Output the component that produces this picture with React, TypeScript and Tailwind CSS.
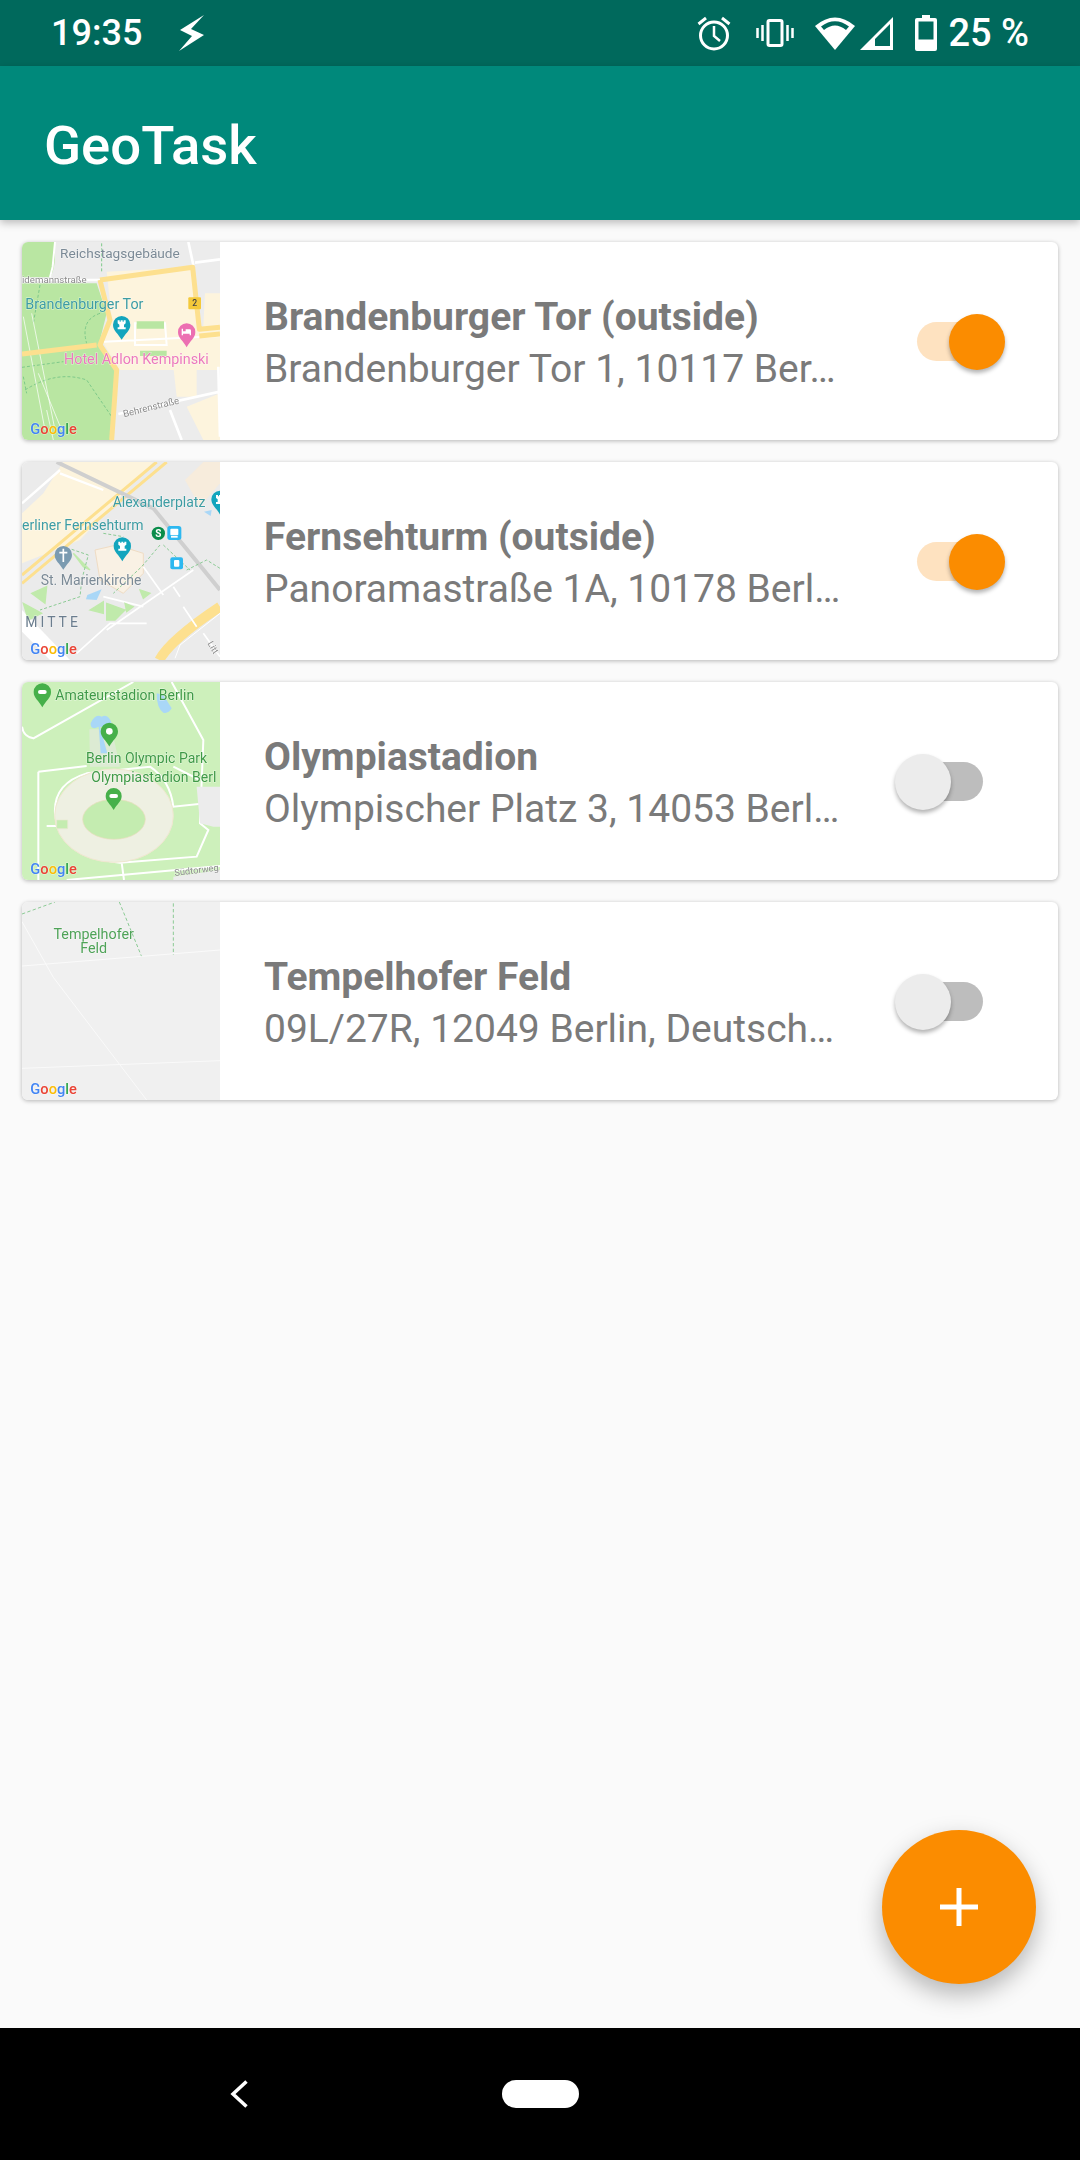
import { ReactNode } from 'react';

interface Place {
  name: string;
  address: string;
  on: boolean;
  map: ReactNode;
}

// map tiles are drawn in a 594 unit box (3 units per screen pixel)
function MapLabel({ x, y, size = 43, fill, children, anchor, spacing, rotate }: {
  x: number;
  y: number;
  size?: number;
  fill: string;
  children: ReactNode;
  anchor?: 'middle';
  spacing?: number;
  rotate?: number;
}) {
  return (
    <text
      x={x}
      y={y}
      fontSize={size}
      fill={fill}
      textAnchor={anchor}
      letterSpacing={spacing}
      stroke="#ffffff"
      strokeOpacity={0.55}
      strokeWidth={3}
      paintOrder="stroke"
      transform={rotate ? `rotate(${rotate} ${x} ${y})` : undefined}
    >
      {children}
    </text>
  );
}

function GoogleMark() {
  return (
    <text x={91} y={612} fontSize={44} fontWeight={500} stroke="#ffffff" strokeOpacity={0.5} strokeWidth={3} paintOrder="stroke">
      <tspan fill="#4285f4">G</tspan>
      <tspan fill="#ea4335">o</tspan>
      <tspan fill="#fbbc05">o</tspan>
      <tspan fill="#4285f4">g</tspan>
      <tspan fill="#34a853">l</tspan>
      <tspan fill="#ea4335">e</tspan>
    </text>
  );
}

function Pin({ x, y, r = 26, fill, children }: { x: number; y: number; r?: number; fill: string; children?: ReactNode }) {
  return (
    <g>
      <path d={`M${x - r} ${y}a${r} ${r} 0 1 1 ${r * 2} 0c0 ${r * 0.7} -${r * 0.6} ${r} -${r} ${r * 1.75}c-${r * 0.4} -${r * 0.75} -${r} -${r * 1.05} -${r} -${r * 1.75}z`} fill={fill} />
      {children}
    </g>
  );
}

function Rook({ x, y }: { x: number; y: number }) {
  return <path d={`M${x - 12} ${y - 13}h6v4h3v-4h6v4h3v-4h6v9l-5 4v8h5v6h-24v-6h5v-8l-5 -4z`} fill="#fff" />;
}

function Tile({ bg, children }: { bg: string; children: ReactNode }) {
  return (
    <svg viewBox="66 36 594 594" className="w-[198px] h-[198px] shrink-0 blur-[0.4px] [font-family:Roboto,sans-serif]" style={{ background: bg }}>
      {children}
      <GoogleMark />
    </svg>
  );
}

const brandenburgMap = (
  <Tile bg="#ececec">
    <path d="M66 36H165V90Q160 130 150 142H66Z" fill="#b9e6a2" />
    <path d="M66 160H290L320 250L300 330L345 415L330 630H66Z" fill="#b9e6a2" />
    <path d="M320 125L578 112L598 290L660 285V420H360L310 340L335 265Z" fill="#fdf4dd" />
    <path d="M615 190L660 190V285L610 290ZM560 530L660 490V630H610ZM520 410H590V500H530Z" fill="#fdf4dd" />
    <path d="M165 36L158 110L150 142" stroke="#fff" strokeWidth="6" fill="none" />
    <path d="M66 150H300" stroke="#fff" strokeWidth="8" />
    <path d="M565 36L580 105M585 98L660 88M655 410L660 620M355 552L660 485M510 540L545 630" stroke="#fff" strokeWidth="8" fill="none" />
    <path d="M405 280H495L500 345H405ZM312 335L660 318" stroke="#fff" strokeWidth="6" fill="none" />
    <path d="M410 274H492V296H410ZM420 362H500V378H420Z" fill="#b9e6a2" />
    <path d="M305 40V130M66 412L190 395M70 440L80 490M75 480Q170 420 260 450L335 560M300 250Q240 270 260 340M120 165L100 280" stroke="#7ec98a" strokeWidth="3" strokeDasharray="9 6" fill="none" />
    <path d="M70 260L135 600M95 250L165 600M115 430L185 600M140 540L160 630" stroke="#fff" strokeWidth="3" fill="none" opacity="0.7" />
    <path d="M66 372L290 345M300 150L330 270L300 345L350 420L335 630M300 150L578 112L598 298L660 292M598 318L660 312" stroke="#fde08f" strokeWidth="15" fill="none" strokeLinejoin="round" />
    <rect x="565" y="202" width="38" height="36" rx="3" fill="#f4c93a" />
    <text x="584" y="229" fontSize="26" fill="#444" textAnchor="middle" fontWeight="500">2</text>
    <MapLabel x={180} y={84} size={41} fill="#7b8a96">Reichstagsgebäude</MapLabel>
    <MapLabel x={66} y={160} size={29} fill="#8b8b8b">idemannstraße</MapLabel>
    <MapLabel x={76} y={236} fill="#3d9ca3">Brandenburger Tor</MapLabel>
    <Pin x={365} y={284} fill="#13a5bd"><Rook x={365} y={284} /></Pin>
    <Pin x={560} y={306} fill="#ec6fb2"><path d="M545 296h4v8h8v-6h12q4 0 4 4v14h-4v-5h-20v5h-4z" fill="#fff" /></Pin>
    <MapLabel x={192} y={402} fill="#ec7abd">Hotel Adlon Kempinski</MapLabel>
    <MapLabel x={372} y={562} size={29} fill="#8b8b8b" rotate={-14}>Behrenstraße</MapLabel>
  </Tile>
);

const fernsehturmMap = (
  <Tile bg="#ebebeb">
    <path d="M190 36H460L240 270L66 340V190L130 130Z" fill="#fdf4dd" />
    <path d="M555 90L610 36H660V100L600 170Z" fill="#f7ecdc" />
    <path d="M285 300L350 285L430 310L430 370L370 430L300 390Z" fill="#f9f1e4" stroke="#efdcc4" strokeWidth="3" />
    <path d="M66 375L470 36M66 400L500 36" stroke="#fde08f" strokeWidth="9" fill="none" />
    <path d="M170 36L460 175L660 420" stroke="#cfcfcf" strokeWidth="12" fill="none" />
    <path d="M478 630Q510 570 660 470" stroke="#fde08f" strokeWidth="30" fill="none" />
    <path d="M525 625L540 585L660 490" stroke="#fff" strokeWidth="3" fill="none" />
    <path d="M66 160L180 60M180 70L310 120" fill="none" stroke="#fff" strokeWidth="7" />
    <path d="M66 480L210 630H150L66 545Z" fill="#fff" />
    <path d="M320 540L580 360M310 440L430 470M430 350L490 435M520 410L540 440M550 470L590 530M230 610L330 520H440M610 550L660 620" stroke="#fff" strokeWidth="5" fill="none" />
    <path d="M220 310L270 360L250 350ZM95 430L140 410L135 460ZM70 460L125 490L85 510ZM270 480L310 455L310 490ZM320 460L375 480L345 510L320 510ZM375 460L400 470L380 485ZM420 420L450 430L430 445Z" fill="#c0eaab" stroke="#c0eaab" strokeWidth="4" />
    <path d="M262 435L305 418L290 450L258 448Z" fill="#a9d7f7" />
    <path d="M612 185L635 180L632 198Z" fill="#a9d7f7" />
    <path d="M215 298L265 315L245 390L240 440L120 480M480 285L425 350L340 430M310 250L370 260M560 360L620 330L660 355M490 285L570 360" stroke="#8ccb95" strokeWidth="3" strokeDasharray="9 6" fill="none" />
    <MapLabel x={338} y={172} size={42} fill="#3d9ca3">Alexanderplatz</MapLabel>
    <Pin x={660} y={148} fill="#13a5bd"><Rook x={660} y={148} /></Pin>
    <MapLabel x={66} y={240} size={42} fill="#3d9ca3">erliner Fernsehturm</MapLabel>
    <Pin x={367} y={288} fill="#13a5bd"><Rook x={367} y={288} /></Pin>
    <circle cx="475" cy="250" r="20" fill="#0a8c4a" />
    <text x="475" y="261" fontSize="30" fill="#fff" textAnchor="middle" fontWeight="700">S</text>
    <rect x="502" y="228" width="42" height="42" rx="8" fill="#2db8f0" />
    <rect x="511" y="236" width="24" height="20" rx="3" fill="#fff" />
    <rect x="513" y="258" width="20" height="5" fill="#fff" />
    <rect x="511" y="322" width="38" height="36" rx="6" fill="#2db8f0" />
    <rect x="522" y="330" width="16" height="20" rx="3" fill="#fff" />
    <Pin x={190} y={314} fill="#7b9bb1">
      <path d="M190 296V336M178 308H202" stroke="#fff" strokeWidth="5" />
    </Pin>
    <MapLabel x={122} y={406} size={42} fill="#7b8a96">St. Marienkirche</MapLabel>
    <MapLabel x={76} y={532} size={42} fill="#6b7d8e" spacing={9}>MITTE</MapLabel>
    <MapLabel x={622} y={580} size={27} fill="#8b8b8b" rotate={60}>Litt</MapLabel>
  </Tile>
);

const stadionMap = (
  <Tile bg="#cdf0bb">
    <path d="M66 170Q70 200 100 205L400 36M515 36L610 210L600 460L625 480L590 560L360 578Q180 560 165 430Q160 340 260 310L450 290Q510 330 520 410L660 395M115 305V630M115 305L260 288M140 468H190M365 578L372 630M200 630L660 588M520 290L600 330" stroke="#fff" strokeWidth="6" fill="none" />
    <ellipse cx="342" cy="437" rx="178" ry="140" fill="#eef0e2" stroke="#f0e7d0" strokeWidth="3" />
    <ellipse cx="342" cy="448" rx="94" ry="60" fill="#c4ecb0" stroke="#ecdcc0" strokeWidth="2" />
    <path d="M170 450H203V476H170Z" fill="#c4ecb0" stroke="#e8e8d0" strokeWidth="2" />
    <path d="M590 350H660V470H640L600 460Z" fill="#ececec" />
    <path d="M520 620L660 600V630H520Z" fill="#ececec" />
    <path d="M268 178H335L360 290H270Z" fill="#dcebd3" />
    <path d="M272 160Q285 130 305 140Q325 130 335 160L330 175L300 170L322 250H302L296 170L285 175Q270 175 272 160Z" fill="#a9d7f7" />
    <path d="M470 70L490 75L515 115Q505 132 490 128Q470 115 470 70Z" fill="#a9d7f7" />
    <Pin x={127} y={66} fill="#46b04a"><rect x="114" y="60" width="26" height="12" rx="6" fill="#fff" /></Pin>
    <MapLabel x={166} y={90} size={42} fill="#3f9a47">Amateurstadion Berlin</MapLabel>
    <Pin x={328} y={184} fill="#46b04a"><circle cx="328" cy="184" r="10" fill="#fff" /></Pin>
    <MapLabel x={258} y={278} size={42} fill="#3f9a47">Berlin Olympic Park</MapLabel>
    <MapLabel x={274} y={335} size={42} fill="#3f9a47">Olympiastadion Berl</MapLabel>
    <Pin x={341} y={378} r={24} fill="#46b04a"><rect x="328" y="372" width="26" height="12" rx="6" fill="#fff" /></Pin>
    <MapLabel x={524} y={618} size={28} fill="#8b8b8b" rotate={-7}>Südtorweg</MapLabel>
  </Tile>
);

const tempelhofMap = (
  <Tile bg="#f0f0f0">
    <path d="M66 72L165 36M358 36L425 200M520 40V195" stroke="#8ccb95" strokeWidth="3" strokeDasharray="10 7" fill="none" />
    <path d="M66 228L660 180M66 95L160 262L440 630M66 535L660 512" stroke="#fafafa" strokeWidth="3" fill="none" />
    <MapLabel x={281} y={146} anchor="middle" fill="#4fa358">Tempelhofer</MapLabel>
    <MapLabel x={281} y={190} anchor="middle" fill="#4fa358">Feld</MapLabel>
  </Tile>
);

const places: Place[] = [
  { name: 'Brandenburger Tor (outside)', address: 'Brandenburger Tor 1, 10117 Ber…', on: true, map: brandenburgMap },
  { name: 'Fernsehturm (outside)', address: 'Panoramastraße 1A, 10178 Berl…', on: true, map: fernsehturmMap },
  { name: 'Olympiastadion', address: 'Olympischer Platz 3, 14053 Berl…', on: false, map: stadionMap },
  { name: 'Tempelhofer Feld', address: '09L/27R, 12049 Berlin, Deutsch…', on: false, map: tempelhofMap },
];

function Toggle({ on }: { on: boolean }) {
  return (
    <div className={`relative w-[66px] h-[39px] rounded-full shrink-0 ${on ? 'bg-[#fee2c0]' : 'bg-[#bdbdbd]'}`}>
      <div
        className={`absolute top-[-8px] w-[56px] h-[56px] rounded-full shadow-[0_3px_4px_rgba(0,0,0,0.3)] ${
          on ? 'right-[-22px] bg-[#fb8c00]' : 'left-[-22px] bg-[#ececec]'
        }`}
      />
    </div>
  );
}

function StatusBar() {
  return (
    <div className="h-[66px] bg-[#00695c] flex items-center pl-[51px] pr-[51px] text-white">
      <span className="text-[36px] font-medium leading-none">19:35</span>
      <svg width="26" height="36" viewBox="0 0 26 36" className="ml-[37px] shrink-0">
        <path d="M25 0L1 15L13 21L0 36L25 20L12 14Z" fill="#fff" />
      </svg>
      <div className="flex-1" />
      <svg width="34" height="35" viewBox="0 0 34 35" className="shrink-0" fill="none" stroke="#fff">
        <circle cx="17" cy="19.5" r="13.5" strokeWidth="3" />
        <path d="M17 10V20L23 25" strokeWidth="2.5" />
        <path d="M1.5 8L9 2M32.5 8L25 2" strokeWidth="3" />
      </svg>
      <svg width="38" height="28" viewBox="0 0 38 28" className="ml-[25px] shrink-0" fill="none" stroke="#fff">
        <rect x="12" y="1.5" width="14" height="25" rx="1.5" strokeWidth="3" />
        <path d="M1.5 9V19M6.5 6V22M31.5 6V22M36.5 9V19" strokeWidth="2.5" />
      </svg>
      <svg width="42" height="35" viewBox="0 0 42 35" className="ml-[20px] shrink-0">
        <path d="M21 34L1 10Q21 -7 41 10Z" fill="#fff" />
        <path d="M7 10.5Q21 0 35 10.5L32 14Q21 5 10 14Z" fill="#00695c" />
      </svg>
      <svg width="34" height="35" viewBox="0 0 34 35" className="ml-[4px] shrink-0">
        <path d="M33 1V34H0Z" fill="#fff" />
        <path d="M30 8L15 23V30H30Z" fill="#00695c" />
      </svg>
      <svg width="22" height="36" viewBox="0 0 22 36" className="ml-[21px] shrink-0">
        <path d="M7 0H15V3H20Q22 3 22 5V34Q22 36 20 36H2Q0 36 0 34V5Q0 3 2 3H7Z" fill="#fff" />
        <rect x="3.5" y="6.5" width="15" height="18" fill="#00695c" />
      </svg>
      <span className="ml-[11px] text-[38px] font-medium leading-none whitespace-nowrap">25 %</span>
    </div>
  );
}

export default function App() {
  return (
    <div className="relative w-[1080px] h-[2160px] bg-[#fafafa] flex flex-col overflow-hidden [font-family:Roboto,sans-serif]">
      <StatusBar />
      <div className="h-[154px] bg-[#00897b] flex items-center pl-[44px] pt-[4px] shadow-[0_3px_8px_rgba(0,0,0,0.25)] z-10">
        <h1 className="text-[54.5px] font-medium text-white leading-none">GeoTask</h1>
      </div>

      <div className="flex-1 flex flex-col gap-[22px] p-[22px]">
        {places.map((p) => (
          <div key={p.name} className="flex items-center h-[198px] bg-white rounded-[6px] overflow-hidden shadow-[0_1px_4px_rgba(0,0,0,0.28)]">
            {p.map}
            <div className="flex-1 pl-[44px] pt-[4px] min-w-0">
              <p className="text-[39px] leading-[52px] font-bold text-[#7a7a7a] whitespace-nowrap">{p.name}</p>
              <p className="text-[39px] leading-[52px] text-[#7a7a7a] whitespace-nowrap">{p.address}</p>
            </div>
            <div className="mr-[75px] ml-[20px]">
              <Toggle on={p.on} />
            </div>
          </div>
        ))}
      </div>

      <div className="h-[132px] bg-black flex items-center relative">
        <svg width="18" height="28" viewBox="0 0 18 28" className="ml-[230px] shrink-0" fill="none" stroke="#fff" strokeWidth="3.5">
          <path d="M16.5 1.5L3 14L16.5 26.5" />
        </svg>
        <div className="ml-[254px] w-[77px] h-[28px] rounded-full bg-white" />
      </div>

      <button className="absolute left-[882px] top-[1830px] w-[154px] h-[154px] rounded-full bg-[#fb8c00] flex items-center justify-center shadow-[0_10px_24px_rgba(0,0,0,0.28)]">
        <svg width="38" height="38" viewBox="0 0 38 38" stroke="#fff" strokeWidth="5">
          <path d="M19 0V38M0 19H38" />
        </svg>
      </button>
    </div>
  );
}
